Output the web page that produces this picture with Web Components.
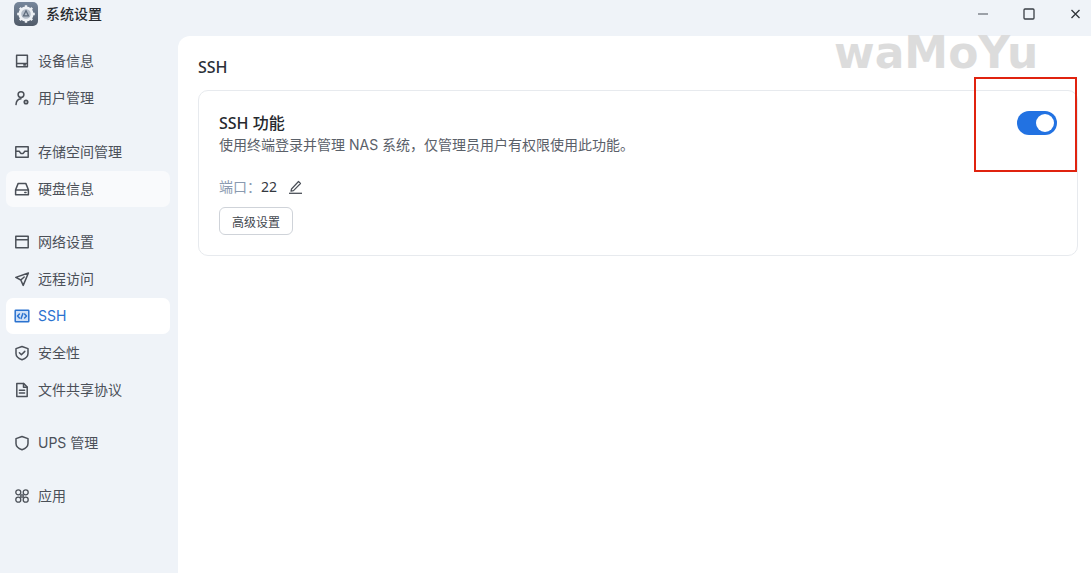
<!DOCTYPE html>
<html lang="zh">
<head>
<meta charset="utf-8">
<title>系统设置</title>
<style>
    html, body { margin: 0; height: 100%; overflow: hidden; }
    body { font-family: Inter, "Noto Sans CJK SC", sans-serif; background: #eff3f8; }
</style>
</head>
<body>

<settings-window>
    <side-nav slot="nav">
        <nav-group>
            <nav-item icon="device">设备信息</nav-item>
            <nav-item icon="user">用户管理</nav-item>
        </nav-group>
        <nav-group style="margin-top: 1px">
            <nav-item icon="storage">存储空间管理</nav-item>
            <nav-item icon="disk" hover>硬盘信息</nav-item>
        </nav-group>
        <nav-group>
            <nav-item icon="network">网络设置</nav-item>
            <nav-item icon="remote">远程访问</nav-item>
            <nav-item icon="ssh" active>SSH</nav-item>
            <nav-item icon="security">安全性</nav-item>
            <nav-item icon="file">文件共享协议</nav-item>
        </nav-group>
        <nav-group>
            <nav-item icon="ups">UPS 管理</nav-item>
        </nav-group>
        <nav-group>
            <nav-item icon="apps">应用</nav-item>
        </nav-group>
    </side-nav>
    <ssh-panel></ssh-panel>
</settings-window>

<script>
(function() {
    /*
     * Nav icons, all drawn on a 16x16 box with the current colour
     */
    const icons = {
        device: '<path d="M2.600 2.200h10.800v11.600H2.600zM2.600 10.400h10.800M9.800 12.100h1.600"/>',
        user: '<circle cx="7" cy="4.600" r="2.900"/><path d="M2 14.600c.2-3.200 2-5.600 5-5.800"/><circle cx="12" cy="12" r="1.700" stroke-width="1.700"/>',
        storage: '<path d="M1.800 2.800h12.400v10.400H1.800zM1.800 7.200h3.400l1.600 2.200h2.400l1.600-2.200h3.400"/>',
        disk: '<path d="M4.200 2.400h7.600l2.600 6.400v5H1.600v-5zM1.600 9h12.800M10.800 11.500h1.200"/>',
        network: '<path d="M1.800 2.200h12.400v11.600H1.800zM1.800 5.800h12.400"/>',
        remote: '<path d="M14.400 2 1.800 6.400l5 2.600 2.400 5.400zM6.800 9l3.400-3"/>',
        security: '<path d="M8 1.500 14 3.600v5c0 3-2.400 5-6 6.200-3.600-1.200-6-3.200-6-6.200v-5z"/><path d="m5.400 7.800 2 2 3.400-3.400"/>',
        file: '<path d="M2.800 1.600h7l3.400 3.400v9.400H2.800z"/><path d="M9.500 1.600v3.700h3.700M5.400 8.200h5.200M5.400 11h5.200"/>',
        ups: '<path d="M8 1.500 14 3.600v5c0 3-2.400 5-6 6.200-3.600-1.200-6-3.200-6-6.200v-5z"/>',
        apps: '<g stroke-width="1.300"><circle cx="4.300" cy="4.300" r="2.500"/><circle cx="11.700" cy="4.300" r="2.500"/><circle cx="4.300" cy="11.700" r="2.500"/><circle cx="11.700" cy="11.700" r="2.500"/><path d="M6.800 6.800h2.400v2.400H6.800z"/></g>',
        ssh: '<rect x="1.200" y="2.200" width="13.600" height="11.600" rx=".6" fill="#cfe0f7"/><path d="M5.400 6 3.500 8l1.900 2M10.600 6l1.900 2-1.900 2M8.900 5.600 7.100 10.400"/>'
    };

    /*
     *     Window: title bar on top, nav and page underneath
     */
    const windowTemplate = document.createElement('template');
    windowTemplate.innerHTML = `
<style>
    :host { display: flex; flex-direction: column; height: 573px; color: #2b3038; }
    .bar { display: flex; align-items: center; height: 36px; flex: none; }
    .logo { width: 24px; height: 24px; margin: -8px 8px 0 14px; flex: none; }
    .name { font-size: 14px; font-weight: 500; color: #26292e; line-height: 20px; margin-top: -8px; }
    .controls { margin-left: auto; display: flex; margin-top: -8px; }
    .controls svg { height: 16px; display: block; }
    .body { flex: 1; display: flex; min-height: 0; }
    .nav { width: 178px; flex: none; }
    .page { flex: 1; background: #fff; border-top-left-radius: 12px; position: relative; min-width: 0; }
</style>
<div class="bar">
    <svg class="logo" viewBox="0 0 24 24">
        <defs>
            <linearGradient id="logoFill" x1="0" y1="0" x2="0" y2="1">
                <stop offset="0" stop-color="#77879c"/>
                <stop offset="1" stop-color="#505a68"/>
            </linearGradient>
        </defs>
        <rect width="24" height="24" rx="5" fill="url(#logoFill)"/>
        <g fill="none" stroke="#eef1f5">
            <circle cx="12" cy="12" r="6.200" stroke-width="2.800" fill="#b4bdc9"/>
            <path stroke-width="2.400" d="M12 3.200v3M12 17.800v3M3.200 12h3M17.800 12h3M5.800 5.800l2 2M16.200 16.200l2 2M18.200 5.800l-2 2M7.800 16.200l-2 2"/>
            <path stroke="#5d6a7b" stroke-width="1.300" d="m12 8.800-2.500 5h5z"/>
        </g>
    </svg>
    <div class="name">系统设置</div>
    <div class="controls">
        <svg width="46" viewBox="0 0 46 16" fill="none"><path stroke-width="1.300" d="M18 8h10" stroke="#70757c"/></svg>
        <svg width="46" viewBox="0 0 46 16" fill="none" stroke="#3a3f46"><rect x="18" y="3" width="10" height="10" rx="1" stroke-width="1.300"/></svg>
        <svg width="39" viewBox="0 0 39 16" fill="none" stroke="#2f343a"><path stroke-width="1.300" d="m19.500 4 8 8M27.500 4l-8 8"/></svg>
    </div>
</div>
<div class="body">
    <div class="nav"><slot name="nav"></slot></div>
    <div class="page"><slot></slot></div>
</div>
`;

    class SettingsWindow extends HTMLElement {
        constructor() {
            super();
            this.attachShadow({mode: 'open'});
            this.shadowRoot.appendChild(windowTemplate.content.cloneNode(true));
        }
    }

    /*
     *     Side nav
     */
    class SideNav extends HTMLElement {
        constructor() {
            super();
            this.attachShadow({mode: 'open'}).innerHTML = `
<style>
    :host { display: flex; flex-direction: column; gap: 17px; padding: 7px 8px 0 6px; }
</style>
<slot></slot>`;
        }
    }

    class NavGroup extends HTMLElement {
        constructor() {
            super();
            this.attachShadow({mode: 'open'}).innerHTML = `
<style>
    :host { display: flex; flex-direction: column; gap: 1px; }
</style>
<slot></slot>`;
        }
    }

    class NavItem extends HTMLElement {
        constructor() {
            super();
            const icon = icons[this.getAttribute('icon')] || '';
            this.attachShadow({mode: 'open'}).innerHTML = `
<style>
    :host { display: flex; align-items: center; height: 36px; border-radius: 7px; padding-left: 8px; font-size: 14px; color: #4b5058; }
    :host([hover]) { background: rgba(255, 255, 255, .6); }
    :host([active]) { background: #fff; color: #2a72cf; }
    svg { width: 16px; height: 16px; margin-right: 8px; flex: none; fill: none; stroke: currentColor; stroke-width: 1.500; stroke-linejoin: round; stroke-linecap: round; }
    span { margin-top: -2px; }
</style>
<svg viewBox="0 0 16 16">${icon}</svg>
<span><slot></slot></span>`;
        }
    }

    /*
     *     Toggle
     */
    class ToggleSwitch extends HTMLElement {
        constructor() {
            super();
            this.attachShadow({mode: 'open'}).innerHTML = `
<style>
    :host { display: flex; justify-content: flex-end; align-items: center; box-sizing: border-box; width: 40px; height: 24px; padding: 3px; border-radius: 12px; background: #2272e2; }
    i { display: block; width: 18px; height: 18px; border-radius: 50%; background: #fff; }
</style>
<i></i>`;
        }
    }

    /*
     *     SSH page
     */
    const panelTemplate = document.createElement('template');
    panelTemplate.innerHTML = `
<style>
    :host { display: block; padding: 20px 13px 0 20px; }
    h2 { margin: 0; font: 500 16px/22px "Noto Sans", "Noto Sans CJK SC", sans-serif; color: #2b3038; }
    .card { margin-top: 12px; box-sizing: border-box; height: 166px; padding: 21px 20px 0; border: 1px solid #e7eaee; border-radius: 10px; position: relative; }
    h3 { margin: 0; font: 500 16px/23px "Noto Sans", "Noto Sans CJK SC", sans-serif; color: #26292e; }
    p { margin: 0; font-size: 14px; line-height: 20px; color: #5a6069; }
    .port { display: flex; align-items: center; margin-top: 20px; height: 22px; font-size: 14px; color: #8a9ab0; }
    .port b { font: 400 14px "Noto Sans", sans-serif; color: #33383f; }
    .port svg { width: 15px; height: 15px; margin-left: 11px; fill: none; stroke: #4b5058; stroke-width: 1.200; stroke-linejoin: round; }
    button { display: block; margin-top: 10px; width: 74px; height: 28px; padding: 0; box-sizing: border-box; background: #fff; border: 1px solid #cfd3d9; border-radius: 6px; font: inherit; font-size: 12px; color: #43484f; }
    toggle-switch { position: absolute; top: 20px; right: 20px; }
    .mark { position: absolute; left: 656px; top: -8px; font: bold 44px "DejaVu Sans", sans-serif; line-height: 50px; color: #dcdcdc; white-space: nowrap; }
    .callout { position: absolute; left: 796px; top: 41px; box-sizing: border-box; width: 103px; height: 95px; border: 2px solid #e0230f; pointer-events: none; }
</style>
<h2>SSH</h2>
<div class="card">
    <h3>SSH 功能</h3>
    <p>使用终端登录并管理 NAS 系统&#xFF0C;仅管理员用户有权限使用此功能。</p>
    <div class="port">
        <span>端口&#xFF1A;</span><b>22</b>
        <svg viewBox="0 0 15 15"><path d="M3.500 10 10.500 2.500l2 2-7 7.200-2.500.4z"/><path stroke-width="1.300" d="M1 14.300h13"/></svg>
    </div>
    <button>高级设置</button>
    <toggle-switch></toggle-switch>
</div>
<div class="mark">waMoYu</div>
<div class="callout"></div>
`;

    class SshPanel extends HTMLElement {
        constructor() {
            super();
            this.attachShadow({mode: 'open'});
            this.shadowRoot.appendChild(panelTemplate.content.cloneNode(true));
        }
    }

    customElements.define('settings-window', SettingsWindow);
    customElements.define('side-nav', SideNav);
    customElements.define('nav-group', NavGroup);
    customElements.define('nav-item', NavItem);
    customElements.define('toggle-switch', ToggleSwitch);
    customElements.define('ssh-panel', SshPanel);
})();
</script>
</body>
</html>
